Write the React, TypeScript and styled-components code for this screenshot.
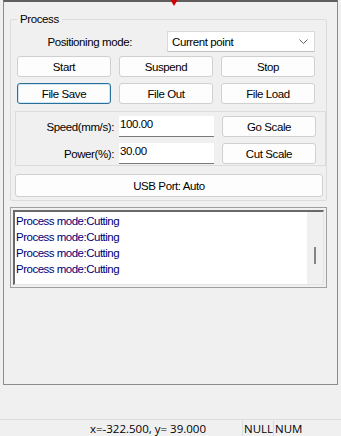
import React from 'react';
import styled, { createGlobalStyle } from 'styled-components';

const GlobalStyle = createGlobalStyle`
    html, body {
        margin: 0;
        padding: 0;
        background: #f0f0f0;
    }
    body {
        font-family: "Liberation Sans", Arial, sans-serif;
        font-size: 11.5px;
        letter-spacing: -0.4px;
        color: #000;
        width: 341px;
        height: 436px;
        overflow: hidden;
    }
`;

const Frame = styled.div`
    position: relative;
    margin-left: 3px;
    width: 333px;
    height: 382px;
    border: 1px solid #8c8c8c;
    border-top: 2px solid #5f5f5f;
`;

const Marker = styled.svg`
    position: absolute;
    left: 165px;
    top: -2px;
`;

const GroupBox = styled.fieldset`
    margin: 10px 0 0 6px;
    padding: 0 0 3px 0;
    width: 317px;
    box-sizing: border-box;
    border: 1px solid #dcdcdc;
    border-radius: 2px;
    min-inline-size: 0;
`;

const Legend = styled.legend`
    margin-left: 6px;
    padding: 0 3px;
    line-height: 14px;
`;

const ModeRow = styled.div`
    display: flex;
    align-items: center;
    margin-top: 5px;
    height: 21px;
`;

const RightLabel = styled.span<{ $w: number }>`
    width: ${p => p.$w}px;
    text-align: right;
    white-space: nowrap;
`;

const Combo = styled.div`
    margin-left: 35px;
    width: 148px;
    height: 21px;
    box-sizing: border-box;
    background: #fff;
    border: 1px solid #d9d9d9;
    border-bottom-color: #c0c0c0;
    display: flex;
    align-items: center;
    justify-content: space-between;
    padding: 0 6px 0 4px;
`;

const ButtonGrid = styled.div`
    display: grid;
    grid-template-columns: repeat(3, 94px);
    grid-auto-rows: 21px;
    column-gap: 8px;
    row-gap: 6px;
    margin: 4px 0 0 6px;
`;

const Btn = styled.div<{ $focus?: boolean; $h?: number }>`
    height: ${p => p.$h ?? 21}px;
    box-sizing: border-box;
    background: #fdfdfd;
    border: 1px solid ${p => (p.$focus ? '#2a6f9a' : '#d0d0d0')};
    box-shadow: ${p => (p.$focus ? 'inset 0 0 0 1px #cfe6f5' : 'none')};
    border-radius: 3px;
    display: flex;
    align-items: center;
    justify-content: center;
    white-space: nowrap;
`;

const ParamBox = styled.div`
    margin: 7px 0 0 4px;
    width: 311px;
    height: 55px;
    box-sizing: border-box;
    border: 1px solid #dcdcdc;
    padding-top: 4px;
    display: flex;
    flex-direction: column;
    gap: 6px;
`;

const ParamRow = styled.div`
    display: flex;
    align-items: center;
    height: 21px;
`;

const Field = styled.div`
    margin-left: 5px;
    width: 95px;
    height: 21px;
    box-sizing: border-box;
    background: #fff;
    border-bottom: 1px solid #7a7a7a;
    padding: 0 1px;
    display: flex;
    align-items: flex-start;
    line-height: 17px;
`;

const ParamBtn = styled(Btn)`
    margin-left: 8px;
    width: 94px;
`;

const UsbBtn = styled(Btn)`
    margin: 8px 0 0 4px;
    width: 308px;
`;

const LogBox = styled.div`
    margin: 6px 0 0 6px;
    width: 317px;
    height: 81px;
    box-sizing: border-box;
    border: 1px solid #a0a0a0;
    padding: 2px;
`;

const LogInner = styled.div`
    height: 100%;
    box-sizing: border-box;
    background: #fff;
    border-top: 2px solid #696969;
    border-left: 2px solid #696969;
    border-right: 1px solid #e3e3e3;
    border-bottom: 1px solid #e3e3e3;
    display: flex;
`;

const LogLines = styled.div`
    flex: 1;
    padding: 1px 0 0 1px;
    color: #00007a;
    line-height: 16px;
    letter-spacing: -0.5px;
`;

const ScrollTrack = styled.div`
    width: 16px;
    background: #f0f0f0;
    display: flex;
    justify-content: center;
    padding-top: 35px;
    box-sizing: border-box;
`;

const Thumb = styled.div`
    width: 2px;
    height: 17px;
    background: #858585;
`;

const StatusBar = styled.div`
    margin-top: 34px;
    border-top: 1px solid #dcdcdc;
    height: 17px;
    display: flex;
    align-items: center;
    font-family: "Open Sans", "Liberation Sans", sans-serif;
    font-size: 11.5px;
    letter-spacing: 0;
`;

const Coord = styled.span`
    margin-left: 90px;
    width: 152px;
`;

const Pane = styled.span<{ $w: number }>`
    width: ${p => p.$w}px;
    overflow: hidden;
    white-space: nowrap;
    border-left: 1px solid #dadada;
    padding-left: 1px;
    box-sizing: border-box;
`;

const logs = ['Process mode:Cutting', 'Process mode:Cutting', 'Process mode:Cutting', 'Process mode:Cutting'];

export default function App() {
    return (
        <>
            <GlobalStyle />
            <Frame>
                <Marker width="10" height="8" viewBox="0 0 10 8">
                    <path d="M1.5 0 L8.5 0 L5 6 Z" fill="#d40000" />
                </Marker>
                <GroupBox>
                    <Legend>Process</Legend>
                    <ModeRow>
                        <RightLabel $w={121}>Positioning mode:</RightLabel>
                        <Combo>
                            <span>Current point</span>
                            <svg width="9" height="6" viewBox="0 0 9 6">
                                <path d="M0.5 0.5 L4.5 4.5 L8.5 0.5" fill="none" stroke="#606060" strokeWidth="1" />
                            </svg>
                        </Combo>
                    </ModeRow>
                    <ButtonGrid>
                        <Btn>Start</Btn>
                        <Btn>Suspend</Btn>
                        <Btn>Stop</Btn>
                        <Btn $focus>File Save</Btn>
                        <Btn>File Out</Btn>
                        <Btn>File Load</Btn>
                    </ButtonGrid>
                    <ParamBox>
                        <ParamRow>
                            <RightLabel $w={98}>Speed(mm/s):</RightLabel>
                            <Field>100.00</Field>
                            <ParamBtn>Go Scale</ParamBtn>
                        </ParamRow>
                        <ParamRow>
                            <RightLabel $w={98}>Power(%):</RightLabel>
                            <Field>30.00</Field>
                            <ParamBtn>Cut Scale</ParamBtn>
                        </ParamRow>
                    </ParamBox>
                    <UsbBtn $h={23}>USB Port: Auto</UsbBtn>
                </GroupBox>
                <LogBox>
                    <LogInner>
                        <LogLines>
                            {logs.map((l, i) => (
                                <div key={i}>{l}</div>
                            ))}
                        </LogLines>
                        <ScrollTrack>
                            <Thumb />
                        </ScrollTrack>
                    </LogInner>
                </LogBox>
            </Frame>
            <StatusBar>
                <Coord>x=-322.500, y= 39.000</Coord>
                <Pane $w={31}>NULL</Pane>
                <Pane $w={34}>NUM</Pane>
            </StatusBar>
        </>
    );
}
